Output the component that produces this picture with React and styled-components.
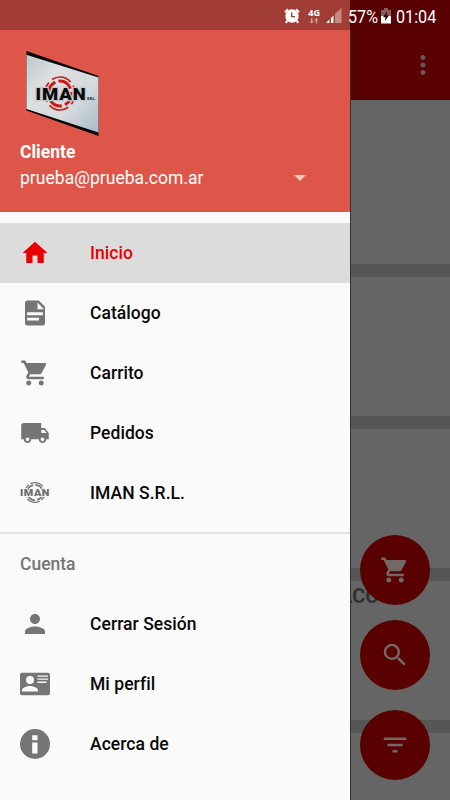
import React from "react";
import styled, { createGlobalStyle } from "styled-components";
import { MdShoppingCart, MdLocalShipping, MdPerson, MdSearch, MdFilterList, MdMoreVert } from "react-icons/md";

const HomeIcon = () => (
    <svg viewBox="0 0 24 24" width="30" height="30" fill="currentColor">
        <path d="M10 20v-6h4v6h5v-8h3L12 3 2 12h3v8z" />
    </svg>
);

const DocumentIcon = () => (
    <svg viewBox="0 0 24 24" width="30" height="30" fill="currentColor" fillRule="evenodd">
        <path d="M6 2h9l5 5v13a2 2 0 0 1-2 2H6a2 2 0 0 1-2-2V4a2 2 0 0 1 2-2zM14 3.500V9h5.300zM5.700 11.400v2.300H18.300v-2.300zM5.700 15.700v2.300H15.200v-2.300z" />
    </svg>
);

const CardIcon = () => (
    <svg viewBox="0 0 30 30" width="30" height="30" fill="currentColor">
        <rect x="0" y="3.700" width="30" height="22.500" rx="2" />
        <g fill="#fafafa">
            <circle cx="10" cy="11" r="4" />
            <path d="M2 22.500v-1.200c0-2.600 5-4.200 8-4.200s8 1.600 8 4.200v1.200z" />
            <path d="M17.500 6.600H28v1.200H17.500zM17.500 9.600H28v1.200H17.500zM17.500 12.600h9v1.300h-9z" />
        </g>
    </svg>
);

const InfoIcon = () => (
    <svg viewBox="0 0 30 30" width="30" height="30">
        <circle cx="15" cy="15" r="15" fill="#757575" />
        <path fill="#fafafa" d="M12.200 6.300h5.300v5h-5.300zM12.200 13.600h5.300v10.800h-5.300z" />
    </svg>
);

const ImanIcon = () => (
    <svg viewBox="0 0 30 30" width="30" height="30" fill="none" stroke="#757575">
        <circle cx="15" cy="14.500" r="9.900" strokeWidth="1.300" strokeDasharray="13.500 2.050" strokeDashoffset="5" />
        <circle cx="15" cy="14.500" r="7.600" strokeWidth="1.700" strokeDasharray="9.800 2.140" />
        <text x="0" y="18" textLength="30" lengthAdjust="spacingAndGlyphs" letterSpacing="0.5" fontFamily="Roboto, sans-serif" fontWeight="900" fontSize="9.500" fill="#6c6c6c" stroke="#fafafa" strokeWidth="1.500" paintOrder="stroke">IMAN</text>
    </svg>
);

const Logo = () => (
    <svg viewBox="0 0 74 88" width="74" height="88">
        <defs>
            <linearGradient id="plate" x1="0" y1="0" x2="1" y2="1">
                <stop offset="0" stopColor="#bfc8ca" />
                <stop offset="0.300" stopColor="#dbdfe0" />
                <stop offset="0.650" stopColor="#d5dadd" />
                <stop offset="1" stopColor="#a9bbc8" />
            </linearGradient>
        </defs>
        <path d="M0.500 1L72.500 26V86L0.500 60.500z" fill="#050505" />
        <path d="M0.500 4.700L72.500 27.500V82.500L0.500 59z" fill="url(#plate)" />
        <g fill="none" stroke="#cf1717">
            <ellipse cx="34" cy="43.500" rx="15" ry="16.500" strokeWidth="1.700" strokeDasharray="20.500 4.300" strokeDashoffset="9" />
            <ellipse cx="34" cy="43.500" rx="11.300" ry="12.500" strokeWidth="3" strokeDasharray="15.500 3.200" strokeDashoffset="2" />
        </g>
        <text x="9.500" y="50" textLength="51" lengthAdjust="spacingAndGlyphs" letterSpacing="0.8" fontFamily="Roboto, sans-serif" fontWeight="900" fontSize="16.500" fill="#0a0a0a" stroke="#c3c8cb" strokeWidth="2.500" paintOrder="stroke">IMAN</text>
        <text x="61" y="50" textLength="8.500" fontFamily="Roboto, sans-serif" fontWeight="900" fontSize="3.500" fill="#222">S.R.L.</text>
    </svg>
);

const AlarmIcon = () => (
    <svg viewBox="0 0 16 16" width="16" height="16" fill="none" stroke="#fff">
        <circle cx="8" cy="8" r="6.700" fill="#fff" stroke="none" />
        <path d="M3.500 12.500L1.800 14.900M12.500 12.500L14.200 14.900M0.900 4.300L4 1.300M15.100 4.300L12 1.300" strokeWidth="2" />
        <path d="M7.700 4.500V8.600H11" stroke="#a13d34" strokeWidth="1.400" />
    </svg>
);

const DataArrows = () => (
    <svg viewBox="0 0 10 6" width="10" height="6" fill="#ce9c97">
        <path d="M2 0h1.400v3H5L2.700 5.500 0.400 3H2zM6.700 5.500h1.400v-3h1.600L7.400 0 5.100 2.500h1.600z" />
    </svg>
);

const SignalIcon = () => (
    <svg viewBox="0 0 16 15" width="16" height="15">
        <path d="M0 15L3.500 11.500V15z" fill="#fff" />
        <path d="M5 15V10L7.500 7.500V15z" fill="#fff" />
        <path d="M9 15V5.800L15.500 0V15z" fill="#c58a84" />
    </svg>
);

const BatteryIcon = () => (
    <svg viewBox="0 0 10 16" width="10" height="16">
        <path d="M3 0h4v2h3v6H0V2h3z" fill="#8a5a5a" />
        <path d="M0 8h10v7.500H0z" fill="#fff" />
        <path d="M6.200 3.500L2 9.200h2.500L3.800 13 8 7.500H5.500z" fill="#1d0303" />
    </svg>
);

const mainItems = [
    { label: "Inicio", icon: <HomeIcon />, active: true },
    { label: "Catálogo", icon: <DocumentIcon /> },
    { label: "Carrito", icon: <MdShoppingCart /> },
    { label: "Pedidos", icon: <MdLocalShipping /> },
    { label: "IMAN S.R.L.", icon: <ImanIcon /> },
];

const accountItems = [
    { label: "Cerrar Sesión", icon: <MdPerson /> },
    { label: "Mi perfil", icon: <CardIcon /> },
    { label: "Acerca de", icon: <InfoIcon /> },
];

const MenuList = ({ items }) => (
    <List>
        {items.map((item) => (
            <Item key={item.label} $active={item.active}>
                <ItemIcon $active={item.active}>{item.icon}</ItemIcon>
                <Label>{item.label}</Label>
            </Item>
        ))}
    </List>
);

const App = () => {
    return (
        <Screen>
            <GlobalStyle />
            <Page>
                <Toolbar>
                    <MdMoreVert />
                </Toolbar>
                <Card $height={164} />
                <Card $height={139} />
                <Card $height={139} />
                <Card $height={139}>ACO</Card>
                <Card $height={67} />
            </Page>
            <Actions>
                <Fab><MdShoppingCart /></Fab>
                <Fab $gap={15}><MdSearch /></Fab>
                <Fab $gap={20}><MdFilterList /></Fab>
            </Actions>
            <Drawer>
                <Header>
                    <Logo />
                    <Name>Cliente</Name>
                    <Account>
                        <span>prueba@prueba.com.ar</span>
                        <Caret />
                    </Account>
                </Header>
                <MenuList items={mainItems} />
                <Section>
                    <SectionTitle>Cuenta</SectionTitle>
                    <MenuList items={accountItems} />
                </Section>
            </Drawer>
            <StatusBar>
                <AlarmIcon />
                <Network>
                    <span>4G</span>
                    <DataArrows />
                </Network>
                <SignalIcon />
                <Percent>57%</Percent>
                <BatteryIcon />
                <Clock>01:04</Clock>
            </StatusBar>
        </Screen>
    );
};

const GlobalStyle = createGlobalStyle`
    body {
        margin: 0;
    }

    svg {
        display: block;
        flex-shrink: 0;
    }
`;

const Screen = styled.div`
    position: relative;
    width: 450px;
    height: 800px;
    overflow: hidden;
    font-family: Roboto, sans-serif;
`;

const Page = styled.main`
    height: 100%;
    display: flex;
    flex-direction: column;
    background: #565656;
`;

const Toolbar = styled.header`
    height: 100px;
    flex-shrink: 0;
    display: flex;
    justify-content: flex-end;
    padding: 50px 12px 0 0;
    box-sizing: border-box;
    background: #590000;
    color: #665858;
    font-size: 30px;
`;

const Card = styled.section`
    height: ${props => props.$height}px;
    flex-shrink: 0;
    margin-bottom: 13px;
    padding: 2px 0 0 339px;
    box-sizing: border-box;
    background: #656565;
    color: #303030;
    font-size: 20px;
    font-weight: 700;
    line-height: 26px;
`;

const Actions = styled.div`
    position: absolute;
    right: 20px;
    bottom: 20px;
`;

const Fab = styled.button`
    width: 70px;
    height: 70px;
    margin: ${props => props.$gap || 0}px 0 0;
    padding: 0;
    display: flex;
    align-items: center;
    justify-content: center;
    border: 0;
    border-radius: 50%;
    background: #590000;
    color: #726868;
    font-size: 30px;
`;

const Drawer = styled.aside`
    position: absolute;
    top: 0;
    left: 0;
    width: 350px;
    height: 100%;
    background: #fafafa;
    border-right: 1px solid #303333;
`;

const Header = styled.div`
    height: 212px;
    margin-bottom: 11px;
    padding: 50px 20px 0;
    box-sizing: border-box;
    background: #de5549;
    color: #fff;
    font-size: 17.5px;

    svg {
        margin-left: 6px;
    }
`;

const Name = styled.div`
    margin-top: 1px;
    font-weight: 700;
    line-height: 26px;
`;

const Account = styled.div`
    display: flex;
    align-items: center;
    justify-content: space-between;
    padding-right: 24px;
    line-height: 26px;
    letter-spacing: 0.03px;
`;

const Caret = styled.span`
    border: 6px solid transparent;
    border-top-color: #f5c8c4;
    border-bottom: 0;
`;

const List = styled.ul`
    margin: 0;
    padding: 0;
    list-style: none;
`;

const Item = styled.li`
    height: 60px;
    display: flex;
    align-items: center;
    gap: 40px;
    padding-left: 20px;
    color: ${props => (props.$active ? "#e80000" : "#080808")};
    background: ${props => (props.$active ? "#dcdcdc" : "transparent")};
    font-size: 17.5px;
    font-weight: 500;
`;

const ItemIcon = styled.span`
    color: ${props => (props.$active ? "#e80000" : "#757575")};
    font-size: 30px;
`;

const Label = styled.span`
    letter-spacing: 0.05px;
`;

const Section = styled.section`
    margin-top: 9px;
    border-top: 2px solid #e2e2e2;
`;

const SectionTitle = styled.h2`
    height: 60px;
    margin: 0;
    padding-left: 20px;
    color: #757575;
    font-size: 17.5px;
    font-weight: 500;
    line-height: 61px;
`;

const StatusBar = styled.div`
    position: absolute;
    top: 0;
    left: 0;
    width: 100%;
    height: 30px;
    display: flex;
    align-items: center;
    justify-content: flex-end;
    padding: 1px 12px 0 0;
    box-sizing: border-box;
    background: linear-gradient(90deg, #a13d34 350px, #590000 350px);
    color: #fff;
`;

const Network = styled.div`
    display: flex;
    flex-direction: column;
    align-items: center;
    gap: 1px;
    margin: 0 6px 0 8px;
    font-family: "Open Sans", sans-serif;
    font-size: 9px;
    font-weight: 700;
    line-height: 9px;
`;

/* narrow digits of the system bar */
const Narrow = styled.span`
    padding-top: 2px;
    font-size: 19px;
    line-height: 24px;
    white-space: nowrap;
    transform: scaleX(0.85);
    transform-origin: left center;
`;

const Percent = styled(Narrow)`
    width: 33px;
    margin-left: 6px;
`;

const Clock = styled(Narrow)`
    width: 42px;
    margin-left: 5px;
`;

export default App;
